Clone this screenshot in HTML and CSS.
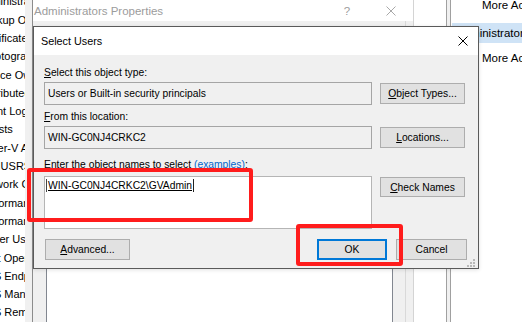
FILE: index.html
```html
<!DOCTYPE html>
<html lang="en">
<head>
  <meta charset="UTF-8">
  <title>Select Users</title>
  <link rel="stylesheet" href="styles.css">
</head>
<body>

  <div class="screen">

    <!-- grupos locales, recortados por la izquierda -->
    <div class="groups">
      <div class="groups-list">
        <div class="grp">Administrators</div>
        <div class="grp">Backup Operators</div>
        <div class="grp">Certificate Service DCOM Access</div>
        <div class="grp">Cryptographic Operators</div>
        <div class="grp">Device Owners</div>
        <div class="grp">Distributed COM Users</div>
        <div class="grp">Event Log Readers</div>
        <div class="grp">Guests</div>
        <div class="grp">Hyper-V Administrators</div>
        <div class="grp">IIS_IUSRS</div>
        <div class="grp">Network Configuration Operators</div>
        <div class="grp">Performance Log Users</div>
        <div class="grp">Performance Monitor Users</div>
        <div class="grp">Power Users</div>
        <div class="grp">Print Operators</div>
        <div class="grp">RDS Endpoint Servers</div>
        <div class="grp">RDS Management Servers</div>
        <div class="grp">RDS Remote Access Servers</div>
      </div>
    </div>
    <div class="gutter"></div>

    <!-- ventana de propiedades (inactiva) -->
    <div class="props">
      <div class="props-title">
        <span class="props-name">Administrators Properties</span>
        <span class="props-help">?</span>
        <span class="props-close">
          <svg width="10" height="10" viewBox="0 0 10 10"><path d="M0.5 0.5L9.5 9.5M9.5 0.5L0.5 9.5" stroke="#a8a8a8" stroke-width="1"/></svg>
        </span>
      </div>
      <div class="props-body">
        <div class="tabpage">
          <div class="members"></div>
        </div>
      </div>
    </div>
    <div class="middle"></div>
    <div class="split"></div>

    <!-- panel de acciones -->
    <div class="actions">
      <div class="act">More Actions</div>
      <div class="act act-head">Administrators</div>
      <div class="act act-last">More Actions</div>
    </div>

    <!-- dialogo Select Users -->
    <div class="picker">
      <div class="pick-title">
        <span class="pick-name">Select Users</span>
        <svg class="pick-close" width="10" height="10" viewBox="0 0 10 10"><path d="M0.5 0.5L9.5 9.5M9.5 0.5L0.5 9.5" stroke="#000" stroke-width="1"/></svg>
      </div>
      <div class="pick-body">
        <div class="pick-label"><u>S</u>elect this object type:</div>
        <div class="pick-line">
          <div class="field">Users or Built-in security principals</div>
          <button class="btn"><u>O</u>bject Types...</button>
        </div>

        <div class="pick-label second"><u>F</u>rom this location:</div>
        <div class="pick-line">
          <div class="field">WIN-GC0NJ4CRKC2</div>
          <button class="btn"><u>L</u>ocations...</button>
        </div>

        <div class="pick-label third"><u>E</u>nter the object names to select <span class="link">(<u>examples</u>)</span>:</div>
        <div class="pick-line names-line">
          <div class="names"><span class="resolved">WIN-GC0NJ4CRKC2\GVAdmin</span></div>
          <button class="btn btn-check"><u>C</u>heck Names</button>
        </div>

        <div class="pick-foot">
          <button class="btn btn-adv"><u>A</u>dvanced...</button>
          <button class="btn btn-ok">OK</button>
          <button class="btn btn-cancel">Cancel</button>
        </div>
      </div>
      <svg class="grip" width="9" height="9" viewBox="0 0 9 9">
        <rect x="7" y="1" width="2" height="2" fill="#b9b9b9"/>
        <rect x="4" y="4" width="2" height="2" fill="#b9b9b9"/>
        <rect x="7" y="4" width="2" height="2" fill="#b9b9b9"/>
        <rect x="1" y="7" width="2" height="2" fill="#b9b9b9"/>
        <rect x="4" y="7" width="2" height="2" fill="#b9b9b9"/>
        <rect x="7" y="7" width="2" height="2" fill="#b9b9b9"/>
      </svg>
    </div>

    <!-- marcas rojas de la captura -->
    <div class="mark mark-names"></div>
    <div class="mark mark-ok"></div>

  </div>

</body>
</html>
```

FILE: styles.css
```css
body {
  margin: 0;
}

.screen {
  position: relative;
  width: 522px;
  height: 322px;
  overflow: hidden;
  display: flex;
  background-color: white;
  font-family: "Liberation Sans", Arial, sans-serif;
  font-size: 10.3px;
  color: #000;
}

/* lista de grupos */
.groups {
  width: 25px;
  flex-shrink: 0;
  overflow: hidden;
  background-color: white;
}

.groups-list {
  margin-top: -7.6px;
  margin-left: -22px;
  font-size: 11px;
}

.grp {
  height: 18.3px;
  line-height: 18.3px;
  white-space: nowrap;
}

.gutter {
  width: 7px;
  flex-shrink: 0;
  background-color: #f0f0f0;
  border-right: 1px solid #8c8c8c;
}

/* propiedades */
.props {
  width: 380px;
  flex-shrink: 0;
  display: flex;
  flex-direction: column;
  border-right: 1px solid #d4d4d4;
}

.props-title {
  height: 21px;
  display: flex;
  align-items: center;
  background-color: white;
  color: #9c9c9c;
  font-size: 11.5px;
  padding-left: 1px;
}

.props-name {
  flex: 1;
}

.props-help,
.props-close {
  width: 44px;
  display: flex;
  justify-content: center;
  align-items: center;
}

.props-body {
  flex: 1;
  display: flex;
  background-color: #f0f0f0;
  padding-right: 7px;
}

.tabpage {
  flex: 1;
  display: flex;
  padding: 0 12px 0 13px;
  border-right: 1px solid #d9d9d9;
}

.members {
  flex: 1;
  margin-top: 200px;
  background-color: white;
  border: 1px solid #828790;
  border-bottom: none;
}

.middle {
  width: 32px;
  flex-shrink: 0;
  background-color: white;
  border-right: 1px solid #a0a0a0;
}

.split {
  width: 3px;
  flex-shrink: 0;
  background-color: #f0f0f0;
  border-right: 1px solid #a0a0a0;
}

/* acciones */
.actions {
  flex: 1;
  min-width: 0;
  overflow: hidden;
  margin-top: -5px;
}

.act {
  height: 20px;
  line-height: 20px;
  padding-left: 31px;
  font-size: 11.5px;
  white-space: nowrap;
}

.act-head {
  margin-top: 8px;
  margin-left: 1px;
  padding-left: 4px;
  background-color: #cfe3f6;
}

.act-last {
  margin-top: 5px;
}

/* dialogo */
.picker {
  position: absolute;
  left: 33px;
  top: 26px;
  width: 446px;
  height: 243px;
  box-sizing: border-box;
  border: 1px solid #5a5a5a;
  background-color: #f0f0f0;
  box-shadow: 0 1px 4px rgba(0,0,0,0.12);
}

.pick-title {
  height: 28px;
  display: flex;
  align-items: center;
  background-color: white;
  padding: 0 10px 0 7px;
  font-size: 10.8px;
}

.pick-name {
  flex: 1;
}

.pick-body {
  padding: 11px 11px 8px 10px;
}

.pick-label {
  height: 14px;
  line-height: 14px;
  white-space: nowrap;
}

.pick-label.second {
  margin-top: 5px;
}

.pick-label.third {
  margin-top: 9px;
}

.link {
  color: #0066cc;
}

.pick-line {
  display: flex;
  gap: 8px;
  align-items: flex-start;
  margin-top: 2px;
}

.names-line {
  margin-top: 4px;
}

.field {
  width: 328px;
  height: 23px;
  box-sizing: border-box;
  border: 1px solid #a5a5a5;
  background-color: #f0f0f0;
  padding-left: 3px;
  display: flex;
  align-items: center;
  white-space: nowrap;
}

.names {
  width: 328px;
  height: 53px;
  box-sizing: border-box;
  border: 1px solid #b5b5b5;
  background-color: white;
  padding: 2px 0 0 1px;
}

.resolved {
  display: inline-block;
  height: 13px;
  line-height: 13px;
  padding: 0 1px;
  border-left: 1px solid #444;
  border-right: 1px solid #222;
  text-decoration: underline;
}

.btn {
  width: 85px;
  height: 21px;
  margin-top: 1px;
  padding: 0;
  box-sizing: border-box;
  background-color: #e1e1e1;
  border: 1px solid #adadad;
  font-family: inherit;
  font-size: 10.3px;
  color: #000;
}

.btn-check {
  height: 20px;
}

.pick-foot {
  display: flex;
  margin-top: 10px;
}

.btn-adv {
  margin: 0 0 0 1px;
}

.btn-ok {
  width: 70px;
  margin: 0 9px 0 auto;
  border: 2px solid #0078d7;
}

.btn-cancel {
  width: 71px;
  margin: 0;
}

.grip {
  position: absolute;
  right: 3px;
  bottom: 1px;
}

/* marcas rojas */
.mark {
  position: absolute;
  border: 4px solid #ff1c1c;
  border-radius: 3px;
  box-sizing: border-box;
}

.mark-names {
  left: 27px;
  top: 168px;
  width: 226px;
  height: 54px;
}

.mark-ok {
  left: 296px;
  top: 224px;
  width: 107px;
  height: 42px;
}
```
